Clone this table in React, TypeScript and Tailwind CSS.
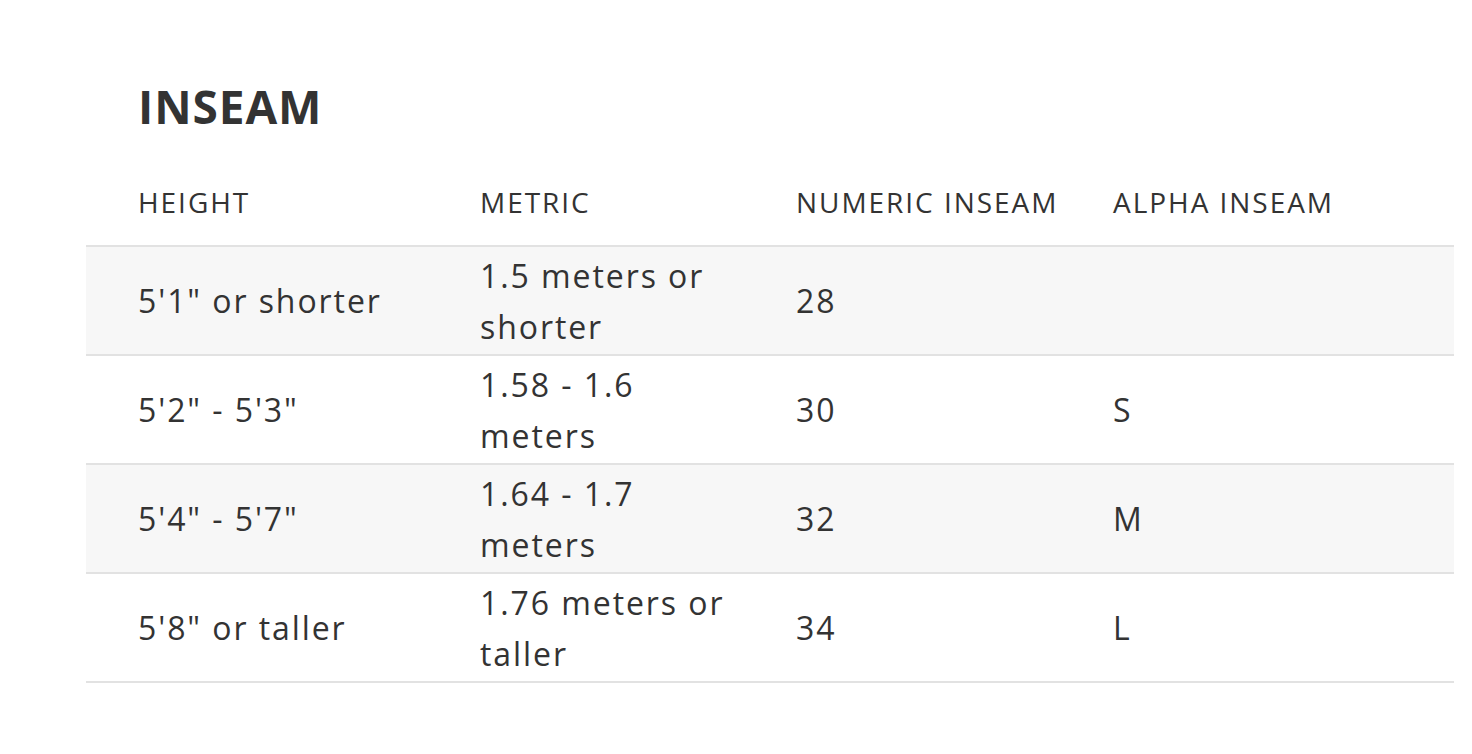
const ROWS = [
  { height: `5'1" or shorter`, metric: "1.5 meters or shorter", numeric: "28", alpha: "" },
  { height: `5'2" - 5'3"`, metric: "1.58 - 1.6 meters", numeric: "30", alpha: "S" },
  { height: `5'4" - 5'7"`, metric: "1.64 - 1.7 meters", numeric: "32", alpha: "M" },
  { height: `5'8" or taller`, metric: "1.76 meters or taller", numeric: "34", alpha: "L" },
];

const COLS = "grid grid-cols-[342px_316px_317px_1fr]";

export default function App() {
  return (
    <div className="min-h-[754px] w-full bg-white font-['Open_Sans',sans-serif] text-[#333]">
      <div className="ml-[86px] w-[1368px] pt-[83px]">
        <h1 className="pl-[52px] text-[46px] font-bold leading-none tracking-[0.02em]">INSEAM</h1>

        {/* Column headings */}
        <div className={`${COLS} whitespace-nowrap border-b-2 border-[#e2e2e2] pt-[59px] pb-[29px] text-[28px] font-medium leading-none tracking-[0.07em]`}>
          <div className="pl-[52px]">HEIGHT</div>
          <div className="pl-[52px]">METRIC</div>
          <div className="pl-[52px]">NUMERIC INSEAM</div>
          <div className="pl-[52px]">ALPHA INSEAM</div>
        </div>

        {ROWS.map((row, i) => (
          <div
            key={row.height}
            className={`${COLS} h-[109px] items-center border-b-2 border-[#e2e2e2] text-[32px] leading-[51px] tracking-[0.06em] ${
              i % 2 === 0 ? "bg-[#f7f7f7]" : "bg-white"
            }`}
          >
            <div className="pl-[52px]">{row.height}</div>
            <div className="pl-[52px]">{row.metric}</div>
            <div className="pl-[52px]">{row.numeric}</div>
            <div className="pl-[52px]">{row.alpha}</div>
          </div>
        ))}
      </div>
    </div>
  );
}
